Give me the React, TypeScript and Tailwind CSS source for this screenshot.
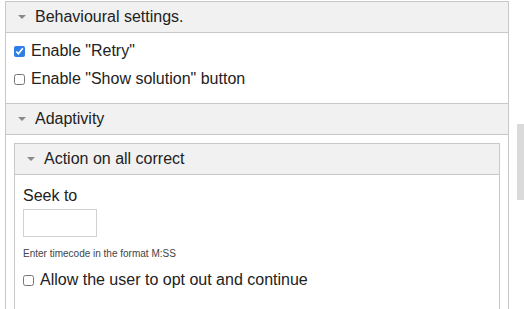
import React from 'react';

const Caret = () => (
    <svg width="8" height="4" viewBox="0 0 8 4" className="shrink-0">
        <path d="M0 0 L8 0 L4 4 Z" fill="#8a8a8a" />
    </svg>
);

const Header = ({ title }: { title: string }) => (
    <div className="flex h-[31px] items-center gap-[9px] border-b border-[#c8c8c8] bg-[#f1f1f1] pl-3">
        <Caret />
        <span>{title}</span>
    </div>
);

const Check = ({ label, checked = false }: { label: string; checked?: boolean }) => (
    <label className="flex h-5 items-center">
        <input type="checkbox" defaultChecked={checked} className="m-0 mr-[6px] h-[11px] w-[11px] accent-[#2f7ee6]" />
        <span>{label}</span>
    </label>
);

export default function App() {
    return (
        <div className="relative h-[309px] w-[524px] overflow-hidden bg-white font-['Liberation_Sans',Arial,sans-serif] text-[16px] text-[#222]">
            <div className="ml-[5px] mt-[1px] w-[504px] border border-[#c8c8c8]">
                <Header title="Behavioural settings." />
                <div className="flex flex-col gap-2 px-2 pb-[14px] pt-2">
                    <Check label={'Enable "Retry"'} checked />
                    <Check label={'Enable "Show solution" button'} />
                </div>
                <div className="border-t border-[#c8c8c8]">
                    <Header title="Adaptivity" />
                    <div className="px-2 pt-2">
                        <div className="border border-[#c8c8c8]">
                            <Header title="Action on all correct" />
                            <div className="px-2 pb-10 pt-[11px]">
                                <div className="leading-5">Seek to</div>
                                <input type="text" className="mt-[3px] block h-[28px] w-[74px] border border-[#d2d2d2] outline-none" />
                                <div className="mt-[10px] text-[10px] leading-[13px] text-[#444]">Enter timecode in the format M:SS</div>
                                <div className="mt-[10px]">
                                    <Check label="Allow the user to opt out and continue" />
                                </div>
                            </div>
                        </div>
                    </div>
                </div>
            </div>
            <div className="absolute left-[517px] top-[124px] h-[76px] w-[7px] bg-[#dadada]" />
        </div>
    );
}
